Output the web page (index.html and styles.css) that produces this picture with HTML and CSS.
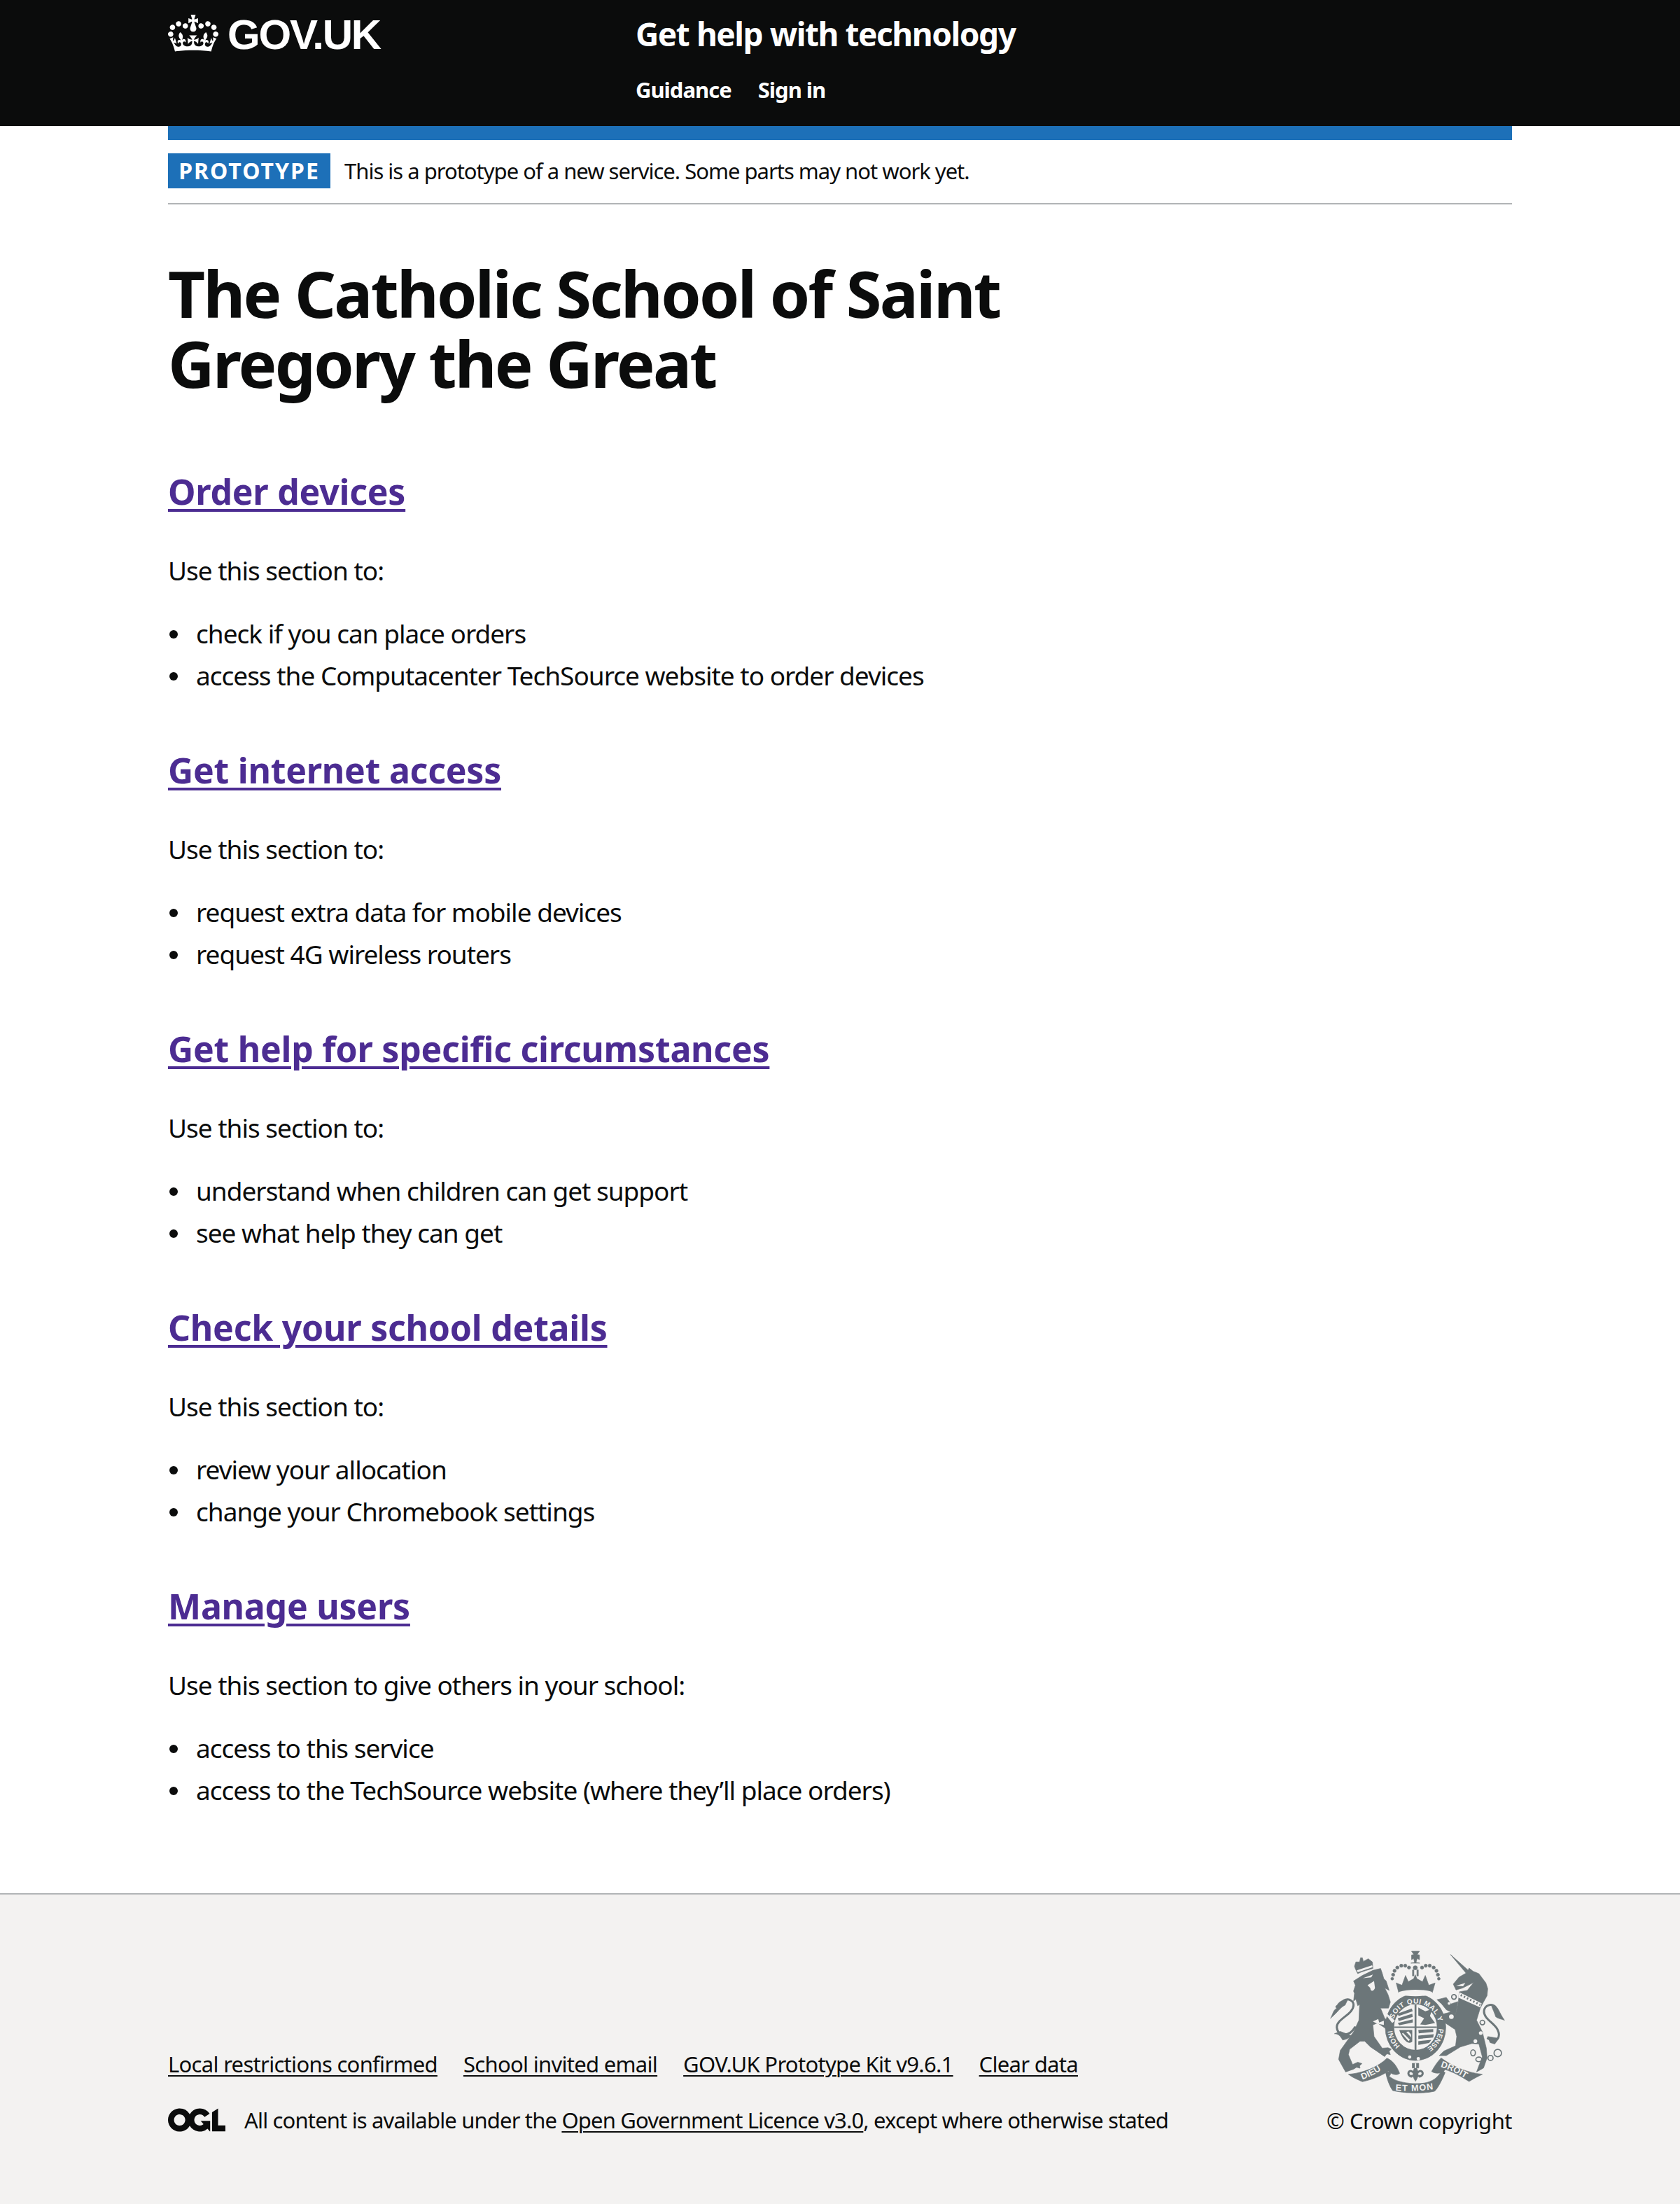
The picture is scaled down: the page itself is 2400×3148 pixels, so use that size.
FILE: index.html
```html
<!DOCTYPE html>
<html lang="en">
<head>
  <meta charset="UTF-8" />
  <title>The Catholic School of Saint Gregory the Great - Get help with technology</title>
  <link rel="stylesheet" href="styles.css">
</head>
<body>
  <header class="site-header">
    <div class="header-inner">
      <a class="logo" href="#">
        <svg class="logo-crown" viewBox="0 0 132 97" aria-hidden="true"><path fill="#fff" d="M25 30.2c3.5 1.5 7.7-.2 9.1-3.7 1.5-3.6-.2-7.8-3.9-9.2-3.6-1.4-7.6.3-9.1 3.9-1.4 3.5.3 7.5 3.9 9zM9 39.5c3.6 1.5 7.8-.2 9.2-3.7 1.5-3.6-.2-7.8-3.9-9.1-3.6-1.5-7.6.2-9.1 3.8-1.4 3.5.3 7.5 3.8 9zM4.4 57.2c3.5 1.5 7.7-.2 9.1-3.8 1.5-3.6-.2-7.7-3.9-9.1-3.5-1.5-7.6.3-9.1 3.8-1.4 3.5.3 7.6 3.9 9.1zm38.3-21.4c3.5 1.5 7.7-.2 9.1-3.8 1.5-3.6-.2-7.7-3.9-9.1-3.6-1.5-7.6.3-9.1 3.8-1.3 3.6.4 7.7 3.9 9.1zm64.4-5.6c-3.6 1.5-7.8-.2-9.1-3.7-1.5-3.6.2-7.8 3.8-9.2 3.6-1.4 7.7.3 9.2 3.9 1.3 3.5-.4 7.5-3.9 9zm15.9 9.3c-3.6 1.5-7.7-.2-9.1-3.7-1.5-3.6.2-7.8 3.7-9.1 3.6-1.5 7.7.2 9.2 3.8 1.5 3.5-.3 7.5-3.8 9zm4.7 17.7c-3.6 1.5-7.8-.2-9.2-3.8-1.5-3.6.2-7.7 3.9-9.1 3.6-1.5 7.7.3 9.2 3.8 1.3 3.5-.4 7.6-3.9 9.1zM89.3 35.8c-3.6 1.5-7.8-.2-9.2-3.8-1.4-3.6.2-7.7 3.9-9.1 3.6-1.5 7.7.3 9.2 3.8 1.4 3.6-.3 7.7-3.9 9.1zM69.7 17.7l8.9 4.7V9.3l-8.9 2.8c-.2-.3-.5-.6-.9-.9L72.4 0H59.6l3.6 11.2c-.3.3-.6.5-.9.9l-8.8-2.8v13.1l8.8-4.7c.3.3.6.7.9.9l-5 15.4v.1c-.2.8-.4 1.6-.4 2.4 0 4.1 3.1 7.5 7 8.1h.2c.3 0 .7.1 1 .1.4 0 .7 0 1-.1h.2c4-.6 7.1-4.1 7.1-8.1 0-.8-.1-1.7-.4-2.4V34l-5.1-15.4c.4-.2.7-.6 1-.9zM66 92.8c16.9 0 32.8 1.1 47.1 3.2 4-16.9 8.9-26.7 14-33.5l-9.6-3.4c1 4.9 1.1 7.2 0 10.2-1.5-1.4-3-4.3-4.2-8.7L108.6 76c2.8-2 5-3.2 7.5-3.3-4.4 9.4-10 11.9-13.6 11.2-4.3-.8-6.3-4.6-5.6-7.9 1-4.7 5.7-5.9 8-.5 4.3-8.7-3-11.4-7.6-8.8 7.1-7.2 7.9-13.5 2.1-21.1-8 6.1-8.1 12.3-4.5 20.8-4.7-5.4-12.1-2.5-9.5 6.2 3.4-5.2 7.9-2 7.2 3.1-.6 4.3-6.4 7.8-13.5 7.2-10.3-.9-10.9-8-11.2-13.8 2.5-.5 7.1 1.8 11 7.3L80.2 60c-4.1 4.4-8 5.3-12.3 5.4 1.4-4.4 8-11.6 8-11.6H55.5s6.4 7.2 7.9 11.6c-4.2-.1-8-1-12.3-5.4l1.4 16.4c3.9-5.5 8.5-7.7 10.9-7.3-.3 5.8-.9 12.8-11.1 13.8-7.2.6-12.9-2.9-13.5-7.2-.7-5 3.8-8.3 7.1-3.1 2.7-8.7-4.6-11.6-9.4-6.2 3.7-8.5 3.6-14.7-4.6-20.8-5.8 7.6-5 13.9 2.2 21.1-4.7-2.6-11.9.1-7.7 8.8 2.3-5.5 7.1-4.2 8.1.5.7 3.3-1.3 7.1-5.7 7.9-3.5.7-9-1.8-13.5-11.2 2.5.1 4.7 1.3 7.5 3.3l-4.7-15.4c-1.2 4.4-2.7 7.2-4.3 8.7-1.1-3-.9-5.3 0-10.2l-9.5 3.4c5 6.9 9.9 16.7 14 33.5 14.8-2.1 30.8-3.2 47.7-3.2z"/></svg>
        <span class="logo-text">GOV.UK</span>
      </a>
      <div class="header-service">
        <a class="service-name" href="#">Get help with technology</a>
        <nav class="header-nav">
          <a href="#">Guidance</a>
          <a href="#">Sign in</a>
        </nav>
      </div>
    </div>
  </header>

  <div class="width-container">
    <div class="blue-bar"></div>
    <div class="phase-banner">
      <strong class="phase-tag">PROTOTYPE</strong>
      <span class="phase-text">This is a prototype of a new service. Some parts may not work yet.</span>
    </div>

    <main class="main-content">
      <h1>The Catholic School of Saint Gregory the Great</h1>

      <section class="task">
        <h2><a href="#">Order devices</a></h2>
        <p>Use this section to:</p>
        <ul>
          <li>check if you can place orders</li>
          <li>access the Computacenter TechSource website to order devices</li>
        </ul>
      </section>

      <section class="task">
        <h2><a href="#">Get internet access</a></h2>
        <p>Use this section to:</p>
        <ul>
          <li>request extra data for mobile devices</li>
          <li>request 4G wireless routers</li>
        </ul>
      </section>

      <section class="task">
        <h2><a href="#">Get help for specific circumstances</a></h2>
        <p>Use this section to:</p>
        <ul>
          <li>understand when children can get support</li>
          <li>see what help they can get</li>
        </ul>
      </section>

      <section class="task">
        <h2><a href="#">Check your school details</a></h2>
        <p>Use this section to:</p>
        <ul>
          <li>review your allocation</li>
          <li>change your Chromebook settings</li>
        </ul>
      </section>

      <section class="task">
        <h2><a href="#">Manage users</a></h2>
        <p>Use this section to give others in your school:</p>
        <ul>
          <li>access to this service</li>
          <li>access to the TechSource website (where they’ll place orders)</li>
        </ul>
      </section>
    </main>
  </div>

  <footer class="site-footer">
    <div class="footer-inner">
      <div class="footer-meta">
        <ul class="footer-links">
          <li><a href="#">Local restrictions confirmed</a></li>
          <li><a href="#">School invited email</a></li>
          <li><a href="#">GOV.UK Prototype Kit v9.6.1</a></li>
          <li><a href="#">Clear data</a></li>
        </ul>
        <div class="licence">
          <svg class="ogl-logo" viewBox="0 0 483.2 195.7" aria-hidden="true"><path fill="#0b0c0c" d="M421.5 142.8V.1l-50.7 32.3v161.1h112.4v-50.7zm-122.3-9.6A47.12 47.12 0 0 1 221 97.8c0-26 21.1-47.1 47.1-47.1 16.7 0 31.4 8.7 39.7 21.8l42.7-27.2A97.63 97.63 0 0 0 268.1 0c-36.5 0-68.3 20.1-85.1 49.7A98 98 0 0 0 97.8 0C43.9 0 0 43.9 0 97.8s43.9 97.8 97.8 97.8c36.5 0 68.3-20.1 85.1-49.7a97.76 97.76 0 0 0 149.6 25.4l19.4 22.2h3v-87.8h-80l24.3 27.5zM97.8 145c-26 0-47.1-21.1-47.1-47.1s21.1-47.1 47.1-47.1 47.2 21 47.2 47S123.8 145 97.8 145"/></svg>
          <span>All content is available under the <a href="#">Open Government Licence v3.0</a>, except where otherwise stated</span>
        </div>
      </div>
      <div class="footer-crown">
        <svg class="crest" viewBox="150 95 770 625" aria-hidden="true">
          <defs>
            <path id="ring-top" d="M428,430 A100,102 0 0 1 628,430"/>
            <path id="ring-left" d="M462,510 A100,102 0 0 1 428,435"/>
            <path id="ring-right" d="M628,435 A100,102 0 0 1 575,520"/>
            <path id="rib-left" d="M300,655 Q355,635 402,598"/>
            <path id="rib-mid" d="M442,702 Q525,708 612,695"/>
            <path id="rib-right" d="M635,600 Q700,620 755,658"/>
          </defs>
          <g class="crest-fill crest-soft">
            <!-- lion crown -->
            <path d="M280,200 C274,188 268,178 266,168 L272,150 L288,150 L292,132 L300,132 L304,148 L325,136 L343,150 L345,178 C325,184 300,190 280,200 Z"/>
            <!-- lion -->
            <path d="M262,232 L300,208 L345,186 L378,178 L385,198 L392,222 L402,232 L415,272 L396,262 L410,290 L420,322 L412,348 L378,348 L395,390 L432,428 L434,456 L425,446 L418,458 L408,444 L395,432 L365,412 L345,420 L350,470 L385,520 L410,518 L424,524 L415,534 L420,548 L405,544 L395,556 L365,535 L335,515 L310,490 L290,490 L245,525 L240,548 L258,590 L280,580 L298,586 L288,596 L290,606 L275,602 L262,610 L228,622 L210,590 L198,568 L205,530 L262,450 L285,400 L288,332 L280,338 L272,310 L262,318 L266,285 L262,275 L270,250 Z"/>
            <!-- lion tail tuft -->
            <path d="M163,392 C175,372 172,360 190,348 C182,345 185,338 192,335 C198,322 215,312 238,309 L226,335 C205,345 195,365 163,392 Z"/>
            <path d="M180,458 C195,458 205,466 215,485 C235,482 245,474 252,466 L205,448 Z"/>
            <!-- crown on shield -->
            <path d="M445,240 L470,250 L485,208 L497,235 L520,222 L527,205 L534,222 L558,235 L570,208 L585,250 L612,240 L600,282 C560,270 495,270 456,282 Z"/>
            <path d="M511,140 L511,120 L521,118 L511,104 L545,104 L535,118 L545,120 L545,140 L535,135 L530,152 L546,155 L508,155 L524,152 L520,135 Z"/>
            <!-- unicorn horn and head -->
            <path d="M678,118 L757,188 L745,198 Z"/>
            <path d="M690,245 L715,215 L750,195 L758,176 L775,190 L800,200 L830,240 L838,265 L835,295 L820,322 L806,348 L790,400 L815,450 L832,520 L835,562 L820,605 L790,622 L802,590 L815,558 L800,502 L770,500 L720,515 L660,552 L630,552 L650,532 L700,510 L705,470 L698,440 L650,408 L640,375 L680,365 L700,375 L712,320 L716,278 L750,272 L778,238 L730,262 L702,270 Z"/>
            <path d="M620,312 L660,302 L680,330 L710,320 L700,375 L660,355 L640,330 Z"/>
            <!-- unicorn tail tuft -->
            <path d="M865,335 C885,345 885,365 910,400 C895,395 880,392 872,385 C870,375 860,355 855,340 Z"/>
            <path d="M838,470 L886,478 L868,502 L848,496 Z"/>
            <!-- garter ring -->
            <ellipse cx="528" cy="430" rx="130" ry="143"/>
            <!-- motto ribbon -->
            <path d="M240,632 C300,628 370,600 405,563 C425,570 445,590 460,628 C445,640 420,630 412,618 C380,640 340,655 300,664 C280,655 255,645 240,632 Z"/>
            <path d="M400,625 C415,615 430,625 415,640 C440,665 500,672 530,672 C570,672 610,665 635,625 C622,625 615,615 640,610 L655,625 C640,660 625,690 610,705 C560,716 480,714 430,702 C415,680 405,650 400,625 Z"/>
            <path d="M597,620 C610,595 625,575 638,562 C690,600 750,625 815,632 C795,642 775,652 758,663 C720,640 690,622 655,612 C648,625 620,635 597,620 Z"/>
            <!-- fleur de lis -->
            <rect x="514" y="585" width="28" height="20"/>
            <path d="M528,600 C542,615 544,640 528,662 C512,640 514,615 528,600 Z"/>
            <rect x="508" y="636" width="40" height="6"/>
            <!-- crown arches -->
            <circle cx="428" cy="222" r="6"/><circle cx="432" cy="205" r="7"/><circle cx="438" cy="188" r="7"/>
            <circle cx="450" cy="174" r="7"/><circle cx="467" cy="166" r="7"/><circle cx="484" cy="166" r="7"/><circle cx="500" cy="174" r="7"/>
            <circle cx="628" cy="222" r="6"/><circle cx="624" cy="205" r="7"/><circle cx="618" cy="188" r="7"/>
            <circle cx="606" cy="174" r="7"/><circle cx="589" cy="166" r="7"/><circle cx="572" cy="166" r="7"/><circle cx="556" cy="174" r="7"/>
            <circle cx="527" cy="175" r="9"/>
            <rect x="515" y="184" width="6" height="26"/><rect x="534" y="184" width="6" height="26"/>
          </g>
          <g class="crest-lines">
            <!-- tails and fleur scrolls -->
            <path d="M268,430 C245,470 195,475 190,430 C188,395 262,375 262,335 C262,315 240,305 220,315"/>
            <path d="M838,478 C880,500 895,470 880,440 C865,410 820,395 822,360 C825,335 855,325 872,345"/>
            <path d="M516,622 C498,608 488,636 510,642"/>
            <path d="M540,622 C558,608 568,636 546,642"/>
          </g>
          <g class="crest-light">
            <ellipse cx="528" cy="430" rx="92" ry="98"/>
            <!-- band under the crown -->
            <path d="M458,278 C495,266 560,266 598,278 L602,288 C560,300 495,300 454,288 Z"/>
            <!-- lion crown band and face -->
            <path d="M276,186 L342,164 L344,172 L280,194 Z"/>
            <path d="M302,220 L345,204 L338,216 Z"/>
            <path d="M322,250 L350,232 L354,262 C348,278 334,278 334,262 Z"/>
            <!-- unicorn collar and mouth -->
            <path d="M716,280 L812,328 L806,345 L712,303 Z"/>
            <path d="M702,252 L742,240 L732,254 Z"/>
            <!-- spots -->
            <circle cx="503" cy="558" r="7"/><circle cx="540" cy="565" r="7"/>
            <circle cx="808" cy="455" r="8"/><circle cx="785" cy="490" r="8"/>
            <circle cx="672" cy="328" r="6"/><circle cx="682" cy="385" r="10"/>
            <!-- lion foreleg -->
            <path d="M378,348 L440,402 L428,412 Z"/>
            <path d="M345,405 L368,395 L372,410 L392,402 L392,420 L362,414 Z"/>
            <!-- fleur top -->
            <rect x="525" y="585" width="6" height="20"/>
          </g>
          <g class="crest-fill">
            <!-- shield quarters -->
            <rect x="524" y="333" width="8" height="195"/>
            <rect x="436" y="427" width="184" height="6"/>
            <path d="M450,372 L512,350 L516,362 L456,382 Z M452,392 L514,372 L516,386 L456,404 Z M452,412 L516,396 L516,410 L458,422 Z"/>
            <path d="M540,345 L570,362 L600,352 L590,382 L612,412 L570,420 L548,418 L565,392 L540,380 Z"/>
            <path d="M458,442 L514,442 L514,492 C500,506 475,490 458,442 Z"/>
            <path d="M540,442 L604,438 L604,450 L542,456 Z M540,466 L606,460 L604,474 L540,480 Z M540,490 L596,484 L586,498 L540,506 Z"/>
          </g>
          <g class="crest-light">
            <path d="M474,454 L504,484 L498,490 L470,458 Z M488,450 L510,474 L508,460 L498,448 Z"/>
          </g>
          <path class="crest-collar" d="M722,292 L806,334"/>
          <g class="crest-rings">
            <circle cx="693" cy="300" r="10"/><circle cx="815" cy="410" r="10"/>
            <ellipse cx="775" cy="540" rx="10" ry="13"/><ellipse cx="800" cy="568" rx="13" ry="10"/>
            <circle cx="850" cy="562" r="11"/><circle cx="881" cy="541" r="16"/>
          </g>
          <g class="crest-words">
            <text class="crest-ring crest-ring-wide"><textPath href="#ring-top" startOffset="35">SOIT QUI MAL Y</textPath></text>
            <text class="crest-ring"><textPath href="#ring-right">PENSE</textPath></text>
            <text class="crest-ring"><textPath href="#ring-left">HONI</textPath></text>
            <text class="crest-rib"><textPath href="#rib-left">DIEU</textPath></text>
            <text class="crest-rib crest-rib-wide"><textPath href="#rib-mid">ET MON</textPath></text>
            <text class="crest-rib"><textPath href="#rib-right">DROIT</textPath></text>
          </g>
        </svg>
        <a href="#" class="copyright">© Crown copyright</a>
      </div>
    </div>
  </footer>
</body>
</html>
```

FILE: styles.css
```css
* {
  box-sizing: border-box;
}
body {
  font-family: "Noto Sans", Arial, sans-serif;
  font-size: 37px;
  line-height: 50px;
  color: #0b0c0c;
  background-color: #fff;
  margin: 0;
  padding: 0;
  letter-spacing: -1px;
}
a {
  color: inherit;
}

/* header */
.site-header {
  background-color: #0b0c0c;
  color: white;
  height: 180px;
}
.header-inner {
  display: flex;
  width: 1920px;
  margin: 0 auto;
}
.logo {
  display: flex;
  width: 668px;
  height: 100px;
  align-items: center;
  text-decoration: none;
}
.logo-crown {
  width: 72px;
  height: 53px;
  margin-top: -6px;
}
.logo-text {
  font-family: "Liberation Sans", Arial, sans-serif;
  font-weight: bold;
  font-size: 60px;
  letter-spacing: -2.2px;
  margin-left: 13px;
}
.service-name {
  display: block;
  font-weight: bold;
  font-size: 46px;
  line-height: 50px;
  padding-top: 23px;
  text-decoration: none;
  letter-spacing: -1.45px;
}
.header-nav {
  display: flex;
  gap: 38px;
  margin-top: 30px;
  font-size: 31px;
  line-height: 50px;
  font-weight: bold;
  letter-spacing: -1px;
}
.header-nav a {
  text-decoration: none;
}

/* phase banner */
.width-container {
  width: 1920px;
  margin: 0 auto;
}
.blue-bar {
  height: 20px;
  background-color: #1d70b8;
}
.phase-banner {
  display: flex;
  align-items: center;
  gap: 20px;
  height: 92px;
  padding-bottom: 2px;
  border-bottom: 2px solid #b1b4b6;
}
.phase-tag {
  display: block;
  width: 232px;
  height: 50px;
  font-size: 32px;
  line-height: 50px;
  text-align: center;
  background-color: #1d70b8;
  color: white;
  letter-spacing: 2px;
}
.phase-text {
  font-size: 31px;
  letter-spacing: -1px;
}

/* main */
.main-content {
  padding-top: 77px;
  padding-bottom: 42px;
}
h1 {
  width: 1280px;
  margin: 0 0 103px;
  font-size: 92px;
  line-height: 100px;
  font-weight: bold;
  letter-spacing: -2.7px;
}
.task {
  margin-bottom: 80px;
}
.task h2 {
  margin: 0 0 58px;
  font-size: 50px;
  line-height: 60px;
  font-weight: bold;
  letter-spacing: -0.25px;
}
.task h2 a {
  color: #4c2c92;
  text-decoration-thickness: 4px;
  text-underline-offset: 6px;
}
.task p {
  margin: 0 0 40px;
}
.task ul {
  margin: 0;
  padding: 0;
  list-style: none;
}
.task li {
  display: flex;
  align-items: center;
  margin-bottom: 10px;
}
.task li::before {
  content: "";
  flex: none;
  width: 12px;
  height: 12px;
  margin: 2px 26px 0 2px;
  border-radius: 50%;
  background-color: #0b0c0c;
}

/* footer */
.site-footer {
  height: 445px;
  background-color: #f3f2f1;
  border-top: 2px solid #b1b4b6;
  font-size: 31px;
  line-height: 40px;
  letter-spacing: -0.84px;
}
.footer-inner {
  display: flex;
  justify-content: space-between;
  width: 1920px;
  margin: 0 auto;
  padding-top: 78px;
}
.footer-meta {
  padding-top: 144px;
}
.footer-links {
  display: flex;
  gap: 37px;
  margin: 0 0 40px;
  padding: 0;
  list-style: none;
  letter-spacing: -0.7px;
}
.footer-links a,
.licence a {
  text-decoration-thickness: 2px;
  text-underline-offset: 4px;
}
.licence {
  display: flex;
  align-items: center;
  gap: 27px;
}
.ogl-logo {
  width: 82px;
  height: 34px;
}
.footer-crown {
  display: flex;
  flex-direction: column;
  align-items: flex-end;
}
.crest {
  width: 257px;
  height: 208px;
  margin-right: 7px;
  margin-bottom: 17px;
}
.crest-fill {
  fill: #6c7679;
}
.crest-soft {
  stroke: #6c7679;
  stroke-width: 2;
  stroke-linejoin: round;
}
.crest-light {
  fill: #f3f2f1;
}
.crest-lines {
  fill: none;
  stroke: #6c7679;
  stroke-width: 9;
  stroke-linecap: round;
}
.crest-collar {
  fill: none;
  stroke: #6c7679;
  stroke-width: 9;
  stroke-dasharray: 6 9;
}
.crest-rings {
  fill: none;
  stroke: #6c7679;
  stroke-width: 5;
}
.crest-words {
  fill: #f3f2f1;
  font-family: "Liberation Sans", Arial, sans-serif;
  font-weight: bold;
  letter-spacing: 0;
}
.crest-ring {
  font-size: 30px;
}
.crest-ring-wide {
  letter-spacing: 2px;
}
.crest-rib {
  font-size: 38px;
}
.crest-rib-wide {
  letter-spacing: 3px;
}
.copyright {
  text-decoration: none;
  letter-spacing: -0.5px;
}
```
